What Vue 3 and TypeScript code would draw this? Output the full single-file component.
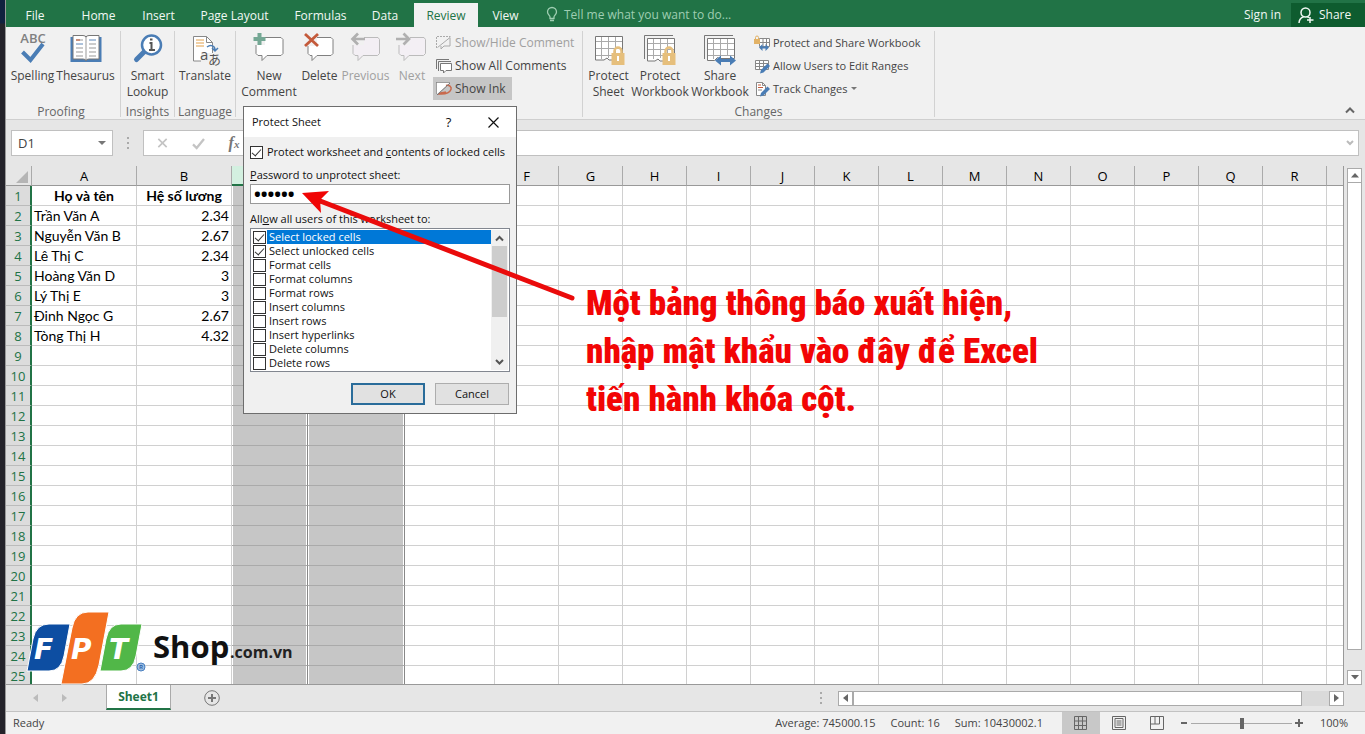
<script setup lang="ts">
import { ref } from 'vue'

interface Person { name: string; rate: string }
interface Permission { label: string; checked: boolean }
interface Column { key: string; heading: string; picked: boolean }

const tabs = ['File', 'Home', 'Insert', 'Page Layout', 'Formulas', 'Data', 'Review', 'View']
const columns: Column[] = 'ABCDEFGHIJKLMNOPQR'.split('').map((key) => ({
  key,
  heading: 'CDE'.includes(key) ? '' : key,
  picked: 'CD'.includes(key),
}))
const people: Person[] = [
  { name: 'Trần Văn A', rate: '2.34' },
  { name: 'Nguyễn Văn B', rate: '2.67' },
  { name: 'Lê Thị C', rate: '2.34' },
  { name: 'Hoàng Văn D', rate: '3' },
  { name: 'Lý Thị E', rate: '3' },
  { name: 'Đinh Ngọc G', rate: '2.67' },
  { name: 'Tòng Thị H', rate: '4.32' },
]
const permissions = ref<Permission[]>([
  { label: 'Select locked cells', checked: true },
  { label: 'Select unlocked cells', checked: true },
  { label: 'Format cells', checked: false },
  { label: 'Format columns', checked: false },
  { label: 'Format rows', checked: false },
  { label: 'Insert columns', checked: false },
  { label: 'Insert rows', checked: false },
  { label: 'Insert hyperlinks', checked: false },
  { label: 'Delete columns', checked: false },
  { label: 'Delete rows', checked: false },
])
const protectSheet = ref(true)
const password = ref('123456')
const zoom = ref(100)

function cellText(row: number, col: string): string {
  if (row === 1) return col === 'A' ? 'Họ và tên' : col === 'B' ? 'Hệ số lương' : ''
  const person = people[row - 2]
  if (!person) return ''
  return col === 'A' ? person.name : col === 'B' ? person.rate : ''
}
</script>

<template>
  <div class="screen">
    <div class="desktop-edge"></div>
    <main class="window">
      <header class="tabbar">
        <nav class="tabs">
          <button v-for="t in tabs" :key="t" class="tab" :class="{ active: t === 'Review' }">{{ t }}</button>
        </nav>
        <button class="tell">
          <svg width="12" height="16" viewBox="0 0 12 16" fill="none" stroke="currentColor">
            <path d="M4 11.500V10C4 8.500 1.500 7.500 1.500 5a4.500 4.500 0 0 1 9 0C10.500 7.500 8 8.500 8 10v1.500ZM4 13.500h4" stroke-width="1.300" />
          </svg>
          <span>Tell me what you want to do...</span>
        </button>
        <button class="signin">Sign in</button>
        <button class="share">
          <svg width="16" height="17" viewBox="0 0 16 17" fill="none" stroke="currentColor" stroke-width="1.500">
            <circle cx="7.500" cy="5.500" r="4.500" />
            <path d="M1 16c.3-3.500 2-5.500 4.500-6M9.500 9.800l1.500.9M12 10v6M9 13h6.500" />
          </svg>
          <span>Share</span>
        </button>
      </header>

      <section class="ribbon">
        <div class="group proofing">
          <div class="tools">
            <button class="big">
              <svg width="32" height="36" viewBox="0 0 32 36">
                <text x="16" y="13" text-anchor="middle" class="abc">ABC</text>
                <path d="M5.500 22l8 8 12.500-16" fill="none" stroke="#4a7db5" stroke-width="4" />
              </svg>
              <span>Spelling</span>
            </button>
            <button class="big">
              <svg width="32" height="36" viewBox="0 0 32 36" fill="none">
                <path d="M.5 7h31v25h-31z" fill="#4a7db5" />
                <path d="M3 5.500h10q3 0 3 2 0-2 3-2h10V29H19q-3 0-3 2 0-2-3-2H3Z" fill="#fff" stroke="#777" />
                <path d="M16 8v22" stroke="#999" />
                <path d="M6 10h7M6 18h7M6 22h7M6 26h7M19 14h7M19 18h7M19 22h7M19 26h7" stroke="#999" />
                <path d="M6 10h4" stroke="#c4542f" /><path d="M6 14h7M19 10h7" stroke="#5b86b8" />
              </svg>
              <span>Thesaurus</span>
            </button>
          </div>
          <h2>Proofing</h2>
        </div>

        <div class="group insights">
          <div class="tools">
            <button class="big">
              <svg width="32" height="36" viewBox="0 0 32 36" fill="none">
                <path d="M12 22L4.500 29.500" stroke="#4a7db5" stroke-width="5" stroke-linecap="round" />
                <circle cx="19.500" cy="15" r="9.500" fill="#fff" stroke="#4a7db5" stroke-width="2.500" />
                <path d="M17.500 13h2v7M17 20h6" stroke="#555" stroke-width="2" /><path d="M18 8.500h2.500v2H18z" fill="#555" />
              </svg>
              <span>Smart<br />Lookup</span>
            </button>
          </div>
          <h2>Insights</h2>
        </div>

        <div class="group language">
          <div class="tools">
            <button class="big">
              <svg width="32" height="36" viewBox="0 0 32 36" fill="none">
                <path d="M4.500 6.500h13l6 6V31h-19z" fill="#fff" stroke="#888" />
                <path d="M17.500 6.500v6h6" stroke="#888" />
                <path d="M7 10h8M7 13h8M7 16h8" stroke="#e2a04a" /><path d="M12 23h12v9H12z" fill="#f0f0f0" />
                <path d="M18 17c4-3 8-1 8 3m-3-2 3 3 3-3" stroke="#4a7db5" stroke-width="1.500" />
                <text x="11" y="30" class="glyph">a</text><text x="19" y="34" class="glyph jp">あ</text>
              </svg>
              <span>Translate</span>
            </button>
          </div>
          <h2>Language</h2>
        </div>

        <div class="group comments">
          <div class="tools">
            <button class="big wide">
              <svg width="32" height="36" viewBox="0 0 32 36" fill="none">
                <path d="M5 7.500h23l2 2v14l-2 2H14l-5 5v-5H5l-2-2v-14Z" fill="#fff" stroke="#808080" />
                <path d="M-2 4h14v11H-2z" fill="#f1f1f1" />
                <path d="M6.500 3v12M.500 9h12" stroke="#74a794" stroke-width="4" />
              </svg>
              <span>New<br />Comment</span>
            </button>
            <button class="big del">
              <svg width="32" height="36" viewBox="0 0 32 36" fill="none">
                <path d="M6 7.500h21l2 2v14l-2 2H13l-5 5v-5H6l-2-2v-14Z" fill="#fff" stroke="#808080" />
                <path d="M0 3h13v13H0z" fill="#f1f1f1" />
                <path d="M1 4l13 12M14 4L1 16" stroke="#c45a3b" stroke-width="2.800" />
              </svg>
              <span>Delete</span>
            </button>
            <button class="big prev" disabled>
              <svg width="32" height="36" viewBox="0 0 32 36" fill="none">
                <path d="M5 7.500h23l1.500 2v14l-2 2H13l-5 5v-5H5l-2-2v-14Z" fill="#f3eff4" stroke="#bbb" />
                <path d="M0 3h14v12H0z" fill="#f1f1f1" />
                <path d="M15 9H3M8 3.500L2.500 9 8 14.500" stroke="#b0b0b0" stroke-width="2.700" />
              </svg>
              <span>Previous</span>
            </button>
            <button class="big next" disabled>
              <svg width="32" height="36" viewBox="0 0 32 36" fill="none">
                <path d="M5 7.500h23l1.500 2v14l-2 2H13l-5 5v-5H5l-2-2v-14Z" fill="#f3eff4" stroke="#bbb" />
                <path d="M0 3h14v12H0z" fill="#f1f1f1" />
                <path d="M0 9h12M7.500 3.500L13 9l-5.500 5.500" stroke="#b0b0b0" stroke-width="2.700" />
              </svg>
              <span>Next</span>
            </button>
            <div class="small-tools">
              <button class="small" disabled>
                <svg width="16" height="16" viewBox="0 0 16 16" fill="none" stroke="#aaa">
                  <path d="M1.500 12.500L14 2.500V11H8l-3 3v-3" /><path d="M.5 13V1.500h14" stroke-dasharray="2 1" />
                </svg>
                Show/Hide Comment
              </button>
              <button class="small">
                <svg width="16" height="16" viewBox="0 0 16 16" fill="none" stroke="#777">
                  <path d="M.5 11V1.500H13M2.500 13V3.500H15" /><path d="M4.500 5.500h11v7H10l-2.500 2.500v-2.500h-3Z" fill="#fff" />
                </svg>
                Show All Comments
              </button>
              <button class="small pressed">
                <svg width="16" height="16" viewBox="0 0 16 16" fill="none">
                  <path d="M1 2h13L1 13z" fill="#fff" /><path d="M.5 1.500h13M.5 1.500V13" stroke="#777" stroke-dasharray="1 1" />
                  <path d="M10 4.500c3-1 6 1.500 5 4s-5 5-12 4.500c2-2 5-1 7-2" stroke="#c96a4d" stroke-width="1.500" /><path d="M1 14L14 2" stroke="#777" />
                </svg>
                Show Ink
              </button>
            </div>
          </div>
        </div>

        <div class="group changes">
          <div class="tools">
            <button class="big psheet">
              <svg width="32" height="36" viewBox="0 0 32 36" fill="none">
                <path d="M2.500 6.500h27v17L20 30h-4l-2-2-3 2H2.500Z" fill="#fff" stroke="#777" />
                <path d="M8.500 7v22M15.500 7v21M22.500 7v20M3 11.500h26M3 18.500h26M3 25.500h26" stroke="#aaa" />
                <path d="M21.500 24v-3a3.500 3.500 0 0 1 7 0v3" stroke="#e6bf7c" stroke-width="2.500" /><path d="M18.500 23h13v12h-13z" fill="#e6bf7c" /><path d="M25 26v5" stroke="#fff" stroke-width="2" />
              </svg>
              <span>Protect<br />Sheet</span>
            </button>
            <button class="big pbook">
              <svg width="32" height="36" viewBox="0 0 32 36" fill="none">
                <path d="M.5 29V5.500H29" stroke="#777" />
                <path d="M3.500 8.500h27v17L20 31h-4l-2-2-3 2H3.500Z" fill="#fff" stroke="#777" />
                <path d="M9.500 9v20M16.500 9v19M23.500 9v17M4 13.500h26M4 19.500h26M4 25.500h26" stroke="#aaa" />
                <path d="M21.500 24v-3a3.500 3.500 0 0 1 7 0v3" stroke="#e6bf7c" stroke-width="2.500" /><path d="M18.500 23h13v12h-13z" fill="#e6bf7c" /><path d="M25 26v5" stroke="#fff" stroke-width="2" />
              </svg>
              <span>Protect<br />Workbook</span>
            </button>
            <button class="big sbook">
              <svg width="32" height="36" viewBox="0 0 32 36" fill="none">
                <path d="M.5 29V5.500H29" stroke="#777" />
                <path d="M3.500 8.500h27v20h-15l-2-1-3 3h-7Z" fill="#fff" stroke="#777" />
                <path d="M9.500 9v20M16.500 9v18M23.500 9v17M4 13.500h26M4 19.500h26M4 25.500h26" stroke="#aaa" />
                <path d="M11 30.500l6-5v3.500h9v-3.500l6 5-6 5V32h-9v3.500Z" fill="#4a7db5" />
              </svg>
              <span>Share<br />Workbook</span>
            </button>
            <div class="small-tools">
              <button class="small">
                <svg width="16" height="16" viewBox="0 0 16 16" fill="none">
                  <path d="M5.500 3.500h10v8h-10zM9 3.500v8M12.500 3.500v8M5.500 7.500h10" fill="#fff" stroke="#888" />
                  <path d="M1.500 4V2.500a1.500 1.500 0 0 1 3 0V4" stroke="#e2b266" /><path d="M0 4h6v5H0z" fill="#e2b266" />
                  <path d="M5 12.500L8.500 9v2.500h3V9l3.500 3.500-3.500 3.500v-2.500h-3V16Z" fill="#4a7db5" />
                </svg>
                Protect and Share Workbook
              </button>
              <button class="small">
                <svg width="16" height="16" viewBox="0 0 16 16" fill="none">
                  <path d="M1.500 2.500h13v9h-13zM5.500 2.500v9M9.500 2.500v9M1.500 5.500h13M1.500 8.500h13" fill="#fff" stroke="#888" />
                  <path d="M6 15.500l1-3.500 6.500-6.500 2.500 2.500-6.500 6.500Z" fill="#4a7db5" />
                </svg>
                Allow Users to Edit Ranges
              </button>
              <button class="small">
                <svg width="16" height="16" viewBox="0 0 16 16" fill="none">
                  <path d="M2.500 1.500h6l3 3v10h-9z" fill="#fff" stroke="#888" /><path d="M8.500 1.500v3h3M4 9h4" stroke="#888" /><path d="M4 4h3M4 6.500h5" stroke="#c45a3b" />
                  <path d="M6 15.500l1-3.500 6.500-6.500 2.500 2.500-6.500 6.500Z" fill="#4a7db5" />
                </svg>
                <span>Track Changes</span>
                <svg class="caret" width="6" height="4" viewBox="0 0 6 4"><path d="M0 0h6L3 3z" fill="#777" /></svg>
              </button>
            </div>
          </div>
          <h2>Changes</h2>
        </div>
        <button class="collapse" aria-label="Collapse the ribbon">
          <svg width="10" height="7" viewBox="0 0 10 7"><path d="M1 5.500l4-4 4 4" fill="none" stroke="#666" stroke-width="2" /></svg>
        </button>
      </section>

      <section class="formula-row">
        <button class="namebox">
          <span>D1</span>
          <svg width="8" height="4" viewBox="0 0 8 4"><path d="M0 0h8L4 4z" fill="#777" /></svg>
        </button>
        <span class="dots"><i></i><i></i><i></i></span>
        <div class="formula">
          <button aria-label="Cancel entry"><svg width="11" height="10" viewBox="0 0 12 12"><path d="M1 1l10 10M11 1L1 11" stroke="#c4c4c4" stroke-width="2" /></svg></button>
          <button aria-label="Enter"><svg width="13" height="11" viewBox="0 0 14 12"><path d="M1 7l4 4 8-10" fill="none" stroke="#c4c4c4" stroke-width="2.500" /></svg></button>
          <button class="fx" aria-label="Insert function">f<small>x</small></button>
          <input type="text" aria-label="Formula bar" />
          <svg width="8" height="6" viewBox="0 0 8 6"><path d="M1 1l3 3 3-3" fill="none" stroke="#bbb" stroke-width="2" /></svg>
        </div>
      </section>

      <section class="workspace">
        <div class="grid">
          <table>
            <colgroup>
              <col class="c-head" /><col class="c-a" /><col class="c-b" /><col class="c-c" /><col class="c-d" /><col class="c-e" />
              <col v-for="n in 13" :key="n" class="c-std" /><col />
            </colgroup>
            <thead>
              <tr>
                <th class="corner"><svg width="12" height="12" viewBox="0 0 12 12"><path d="M12 0v12H0z" fill="#b5b5b5" /></svg></th>
                <th v-for="c in columns" :key="c.key" :class="{ picked: c.picked }">{{ c.heading }}</th>
                <th class="rest"></th>
              </tr>
            </thead>
            <tbody>
              <tr v-for="r in 25" :key="r" :class="{ titles: r === 1 }">
                <th>{{ r }}</th>
                <td v-for="c in columns" :key="c.key" :class="{ num: c.key === 'B', sel: c.picked }">{{ cellText(r, c.key) }}</td>
                <td class="rest"></td>
              </tr>
            </tbody>
          </table>
        </div>
        <div class="vscroll">
          <button aria-label="Scroll up"><svg width="8" height="5" viewBox="0 0 8 5"><path d="M0 4.500h8L4 0z" fill="#666" /></svg></button>
          <div class="vthumb"></div>
          <button aria-label="Scroll down"><svg width="8" height="5" viewBox="0 0 8 5"><path d="M0 0h8L4 4.500z" fill="#666" /></svg></button>
        </div>
      </section>

      <section class="sheetbar">
        <div class="arrows">
          <svg width="5" height="8" viewBox="0 0 5 8"><path d="M5 0v8L0 4z" fill="#bbb" /></svg>
          <svg width="5" height="8" viewBox="0 0 5 8"><path d="M0 0v8l5-4z" fill="#bbb" /></svg>
        </div>
        <button class="sheet">Sheet1</button>
        <button class="add" aria-label="New sheet">
          <svg width="16" height="16" viewBox="0 0 16 16" fill="none" stroke="#777"><circle cx="8" cy="8" r="7.300" /><path d="M4 8h8M8 4v8" stroke-width="2" /></svg>
        </button>
        <span class="dots"><i></i><i></i><i></i></span>
        <div class="hscroll">
          <button aria-label="Scroll left"><svg width="5" height="8" viewBox="0 0 5 8"><path d="M5 0v8L0 4z" fill="#666" /></svg></button>
          <div class="hthumb"></div>
          <button aria-label="Scroll right"><svg width="5" height="8" viewBox="0 0 5 8"><path d="M0 0v8l5-4z" fill="#666" /></svg></button>
        </div>
      </section>

      <footer class="status">
        <span class="ready">Ready</span>
        <span class="stat">Average: 745000.15</span>
        <span class="stat">Count: 16</span>
        <span class="stat">Sum: 10430002.1</span>
        <div class="views">
          <button class="on" aria-label="Normal view"><svg width="14" height="14" viewBox="0 0 14 14"><path d="M.5.5h12v13H.5zM4.500 0v13M8.500 0v13M0 5h13M0 9.500h13" fill="none" stroke="#666" /></svg></button>
          <button aria-label="Page layout view"><svg width="14" height="14" viewBox="0 0 14 14"><path d="M.5.5h13v13H.5zM3 2.500h8v9H3zM4.500 5h5M4.500 7h5M4.500 9h5" fill="none" stroke="#666" /></svg></button>
          <button aria-label="Page break view"><svg width="14" height="14" viewBox="0 0 14 14"><path d="M.5.5h13v13H.5zM5 .5V8M9.500 .5V8M.5 8h9" fill="none" stroke="#666" /></svg></button>
        </div>
        <div class="zoomer">
          <button aria-label="Zoom out"><svg width="8" height="8" viewBox="0 0 8 8"><path d="M1 4h6" stroke="#666" stroke-width="2" /></svg></button>
          <input v-model="zoom" type="range" min="0" max="200" aria-label="Zoom" />
          <button aria-label="Zoom in"><svg width="8" height="8" viewBox="0 0 8 8"><path d="M0 4h8M4 0v8" stroke="#666" stroke-width="2" /></svg></button>
        </div>
        <button class="percent">{{ zoom }}%</button>
      </footer>

      <form class="dialog" role="dialog" aria-labelledby="dialog-title" @submit.prevent>
        <div class="titlebar">
          <h1 id="dialog-title">Protect Sheet</h1>
          <button type="button" class="help">?</button>
          <button type="button" aria-label="Close"><svg width="11" height="11" viewBox="0 0 11 11"><path d="M.5.5l10 10M10.500.5l-10 10" stroke="#111" stroke-width="1.200" /></svg></button>
        </div>
        <div class="body">
          <label class="check"><input v-model="protectSheet" type="checkbox" /><span>Protect worksheet and <u>c</u>ontents of locked cells</span></label>
          <label class="line" for="password"><u>P</u>assword to unprotect sheet:</label>
          <input id="password" v-model="password" class="password" type="password" autocomplete="off" />
          <p class="line allow">All<u>o</u>w all users of this worksheet to:</p>
          <div class="list">
            <div class="items">
              <label v-for="(p, i) in permissions" :key="p.label" class="check item" :class="{ current: i === 0 }">
                <input v-model="p.checked" type="checkbox" /><span>{{ p.label }}</span>
              </label>
            </div>
            <div class="listscroll">
              <svg width="9" height="16" viewBox="0 0 9 16"><path d="M1 10.500L4.500 7 8 10.500" fill="none" stroke="#555" stroke-width="2" /></svg>
              <div class="lthumb"></div>
              <svg width="9" height="16" viewBox="0 0 9 16"><path d="M1 6l3.500 3.500L8 6" fill="none" stroke="#555" stroke-width="2" /></svg>
            </div>
          </div>
          <div class="actions">
            <button type="submit" class="ok">OK</button>
            <button type="button">Cancel</button>
          </div>
        </div>
      </form>

      <svg class="arrow" width="280" height="112" viewBox="0 0 280 112">
        <path d="M14 10L271 109" stroke="#ea0b0b" stroke-width="5" stroke-linecap="round" />
        <path d="M1 4l27-2-9 9 1 13z" fill="#f00505" />
      </svg>
      <p class="note">Một bảng thông báo xuất hiện,<br />nhập mật khẩu vào đây để Excel<br />tiến hành khóa cột.</p>

      <svg class="logo" width="272" height="74" viewBox="0 0 272 74">
        <g stroke="#fff" stroke-width="1">
          <path d="M1 60L7 28Q10 13 23 13H44L38 45Q35 60 23 60Z" fill="#0d4ea2" />
          <path d="M35 73L46 17Q49 1 62 1H83L73 54Q69 73 56 73Z" fill="#f36f21" />
          <path d="M74 60L80 28Q83 13 95 13H116L110 45Q107 60 95 60Z" fill="#51b748" />
        </g>
        <g class="letters"><text x="8" y="48">F</text><text x="45" y="48">P</text><text x="83" y="48">T</text></g>
        <circle cx="115" cy="56" r="4" fill="#9dbce0" stroke="#4a80c0" /><text x="115" y="58" class="reg">R</text>
        <text x="127" y="47" class="shop">Shop</text><text x="204" y="47" class="domain">.com.vn</text>
      </svg>
    </main>
  </div>
</template>

<style>
body { margin: 0; }
</style>

<style scoped>
* { box-sizing: border-box; }
.screen { display: flex; min-height: 100vh; font: 12px/16px "Open Sans", "Noto Sans", sans-serif; color: #444; overflow: hidden; }
button { font: inherit; color: inherit; background: none; border: 0; padding: 0; margin: 0; white-space: nowrap; }
input { margin: 0; font: inherit; }
h1, h2, p { margin: 0; font: inherit; }
svg { flex: none; overflow: visible; }
.desktop-edge { width: 6px; flex: none; background: linear-gradient(#10213f 0 23px, #24232a 24px); border-right: 1px solid #999; }
.window { position: relative; flex: 1; min-width: 0; display: flex; flex-direction: column; background: #e6e6e6; }

.tabbar { display: flex; align-items: stretch; height: 27px; flex: none; background: #217346; color: #f1f8f4; }
.tabs { display: grid; grid-template-columns: 58px 69px 51px 101px 71px 58px 64px 55px; padding-top: 3px; }
.tab { padding-top: 1px; }
.tab.active { background: #f1f1f1; color: #217346; }
.tell { display: flex; align-items: center; gap: 6px; margin-left: 13px; padding-top: 3px; color: #9fceb2; }
.signin { margin-left: auto; margin-right: 10px; padding-top: 3px; }
.share { display: flex; align-items: center; gap: 5px; width: 74px; margin-top: 3px; padding-left: 7px; background: #0e5c2f; }

.ribbon { display: flex; height: 93px; flex: none; padding: 4px 0 2px; background: #f1f1f1; border-bottom: 1px solid #cfcfcf; }
.group { display: flex; flex-direction: column; justify-content: space-between; border-right: 1px solid #d2d2d2; }
.group h2 { text-align: center; color: #666; line-height: 10px; }
.tools { display: flex; align-items: flex-start; justify-content: center; }
.big { display: flex; flex-direction: column; align-items: center; margin-top: -1px; }
.big span { margin-top: 2px; }
.proofing { width: 115px; padding-right: 6px; padding-left: 2px; }
.proofing .big:first-child { width: 50px; }
.proofing .big { width: 57px; }
.insights { width: 54px; }
.language { width: 61px; }
.comments { width: 347px; }
.comments .tools, .changes .tools { justify-content: flex-start; padding-left: 3px; }
.wide { width: 60px; }
.del { width: 41px; }
.prev { width: 51px; }
.next { width: 42px; }
.changes { width: 352px; }
.changes .tools { padding-left: 4px; }
.psheet { width: 43px; }
.pbook { width: 60px; }
.sbook { width: 60px; margin-right: 4px; }
button:disabled { color: #a0a0a0; }
.small-tools { display: flex; flex-direction: column; align-items: flex-start; }
.small { display: flex; align-items: center; gap: 3px; height: 23px; padding: 0 6px 0 3px; }
.changes .small { padding-left: 0; font-size: 11px; }
.pressed { background: #c6c6c6; }
.abc { font: 600 13px "Open Sans", sans-serif; fill: #808080; }
.glyph { font: 15px "Open Sans", sans-serif; fill: #555; }
.glyph.jp { font: 13px "Noto Sans CJK JP", sans-serif; }
.collapse { margin: 76px 10px 0 auto; line-height: 0; align-self: flex-start; }

.formula-row { display: flex; align-items: center; height: 46px; flex: none; padding: 0 6px 0 5px; }
.namebox { display: flex; align-items: center; justify-content: space-between; width: 102px; height: 26px; padding: 0 6px; background: #fff; border: 1px solid #c0c0c0; font-size: 13px; }
.dots { display: flex; flex-direction: column; gap: 3px; width: 2px; }
.dots i { height: 2px; background: #aaa; }
.formula-row .dots { margin: 0 14px; }
.formula { flex: 1; display: flex; align-items: center; height: 26px; background: #fff; border: 1px solid #c0c0c0; padding-right: 4px; }
.formula button { width: 36px; line-height: 0; }
.formula .fx { font: italic bold 16px/20px "Liberation Serif", serif; color: #777; }
.fx small { font-size: 11px; }
.formula input { flex: 1; min-width: 0; border: 0; outline: 0; }

.workspace { display: flex; height: 519px; flex: 1 0 auto; }
.grid { flex: 1; min-width: 0; height: 519px; overflow: hidden; border-right: 1px solid #999; border-bottom: 1px solid #999; background: #fff; }
table { width: 100%; table-layout: fixed; border-collapse: separate; border-spacing: 0; font-family: Lato, "Open Sans", sans-serif; font-size: 14px; color: #000; }
.c-head { width: 26px; } .c-a { width: 105px; } .c-b { width: 95px; } .c-c { width: 76px; } .c-d { width: 97px; } .c-e { width: 90px; } .c-std { width: 64px; }
th, td { height: 20px; padding: 0 2px; line-height: 18px; overflow: hidden; white-space: nowrap; font-weight: 400; border-right: 1px solid #d0d0d0; border-bottom: 1px solid #d0d0d0; }
thead th { background: #e6e6e6; border-right-color: #aaa; border-bottom-color: #999; font-family: "Open Sans", sans-serif; font-size: 13px; }
thead .picked { background: #d3f0e0; border-bottom: 2px solid #217346; }
.rest { border-right: 0; }
.corner { line-height: 0; text-align: right; vertical-align: bottom; padding: 2px 3px; }
tbody th { background: #dcdcdc; color: #217346; padding: 0; border-right: 2px solid #217346; border-bottom-color: #bbb; font-family: "Open Sans", sans-serif; font-size: 13px; }
.num { text-align: right; }
.titles td { font-weight: 700; text-align: center; }
.sel { background: #c6c6c6; border-bottom-color: #aaa; border-right-color: #888; box-shadow: inset 1px 0 #fff, inset -1px 0 #fff; }
.vscroll { display: flex; flex-direction: column; width: 21px; padding: 2px 3px 0; }
.vscroll button { height: 15px; flex: none; background: #fff; border: 1px solid #aaa; line-height: 0; display: grid; place-items: center; }
.vthumb { height: 467px; background: #fff; border: 1px solid #aaa; border-top-width: 0; }
.vscroll button:last-child { margin-top: auto; }

.sheetbar { display: flex; align-items: center; height: 27px; flex: none; padding-right: 21px; border-bottom: 1px solid #c2c2c2; }
.arrows { display: flex; gap: 24px; width: 100px; padding-left: 27px; }
.sheet { align-self: flex-start; width: 65px; height: 25px; background: #fff; border: 1px solid #aaa; border-top: 0; border-bottom: 2px solid #217346; color: #217346; font-weight: 700; }
.add { margin-left: 33px; line-height: 0; }
.sheetbar .dots { margin-left: auto; margin-right: 16px; }
.hscroll { display: flex; width: 506px; height: 15px; background: #dadada; }
.hscroll button { width: 15px; background: #fff; border: 1px solid #aaa; line-height: 0; display: grid; place-items: center; }
.hthumb { width: 449px; background: #fff; border: 1px solid #aaa; }
.hscroll button:last-child { margin-left: auto; }

.status { display: flex; align-items: center; height: 22px; flex: none; background: #f1f1f1; font-size: 11px; }
.ready { margin-left: 7px; margin-right: auto; }
.stat { margin-right: 15px; }
.views { display: flex; align-self: stretch; margin-left: 4px; }
.views button { width: 38px; display: grid; place-items: center; }
.views .on { background: #c8c8c8; }
.zoomer { display: flex; align-items: center; gap: 3px; margin-left: 4px; }
.zoomer button { line-height: 0; }
.zoomer input { appearance: none; width: 101px; height: 12px; background: linear-gradient(#aaa, #aaa) center / 100% 1px no-repeat; }
.zoomer input::-webkit-slider-thumb { appearance: none; width: 4px; height: 11px; background: #666; }
.percent { width: 62px; text-align: center; }

.dialog { position: absolute; left: 237px; top: 106px; width: 274px; background: #f0f0f0; border: 1px solid #6d6d6d; color: #111; font-size: 11px; line-height: 14px; }
.titlebar { display: flex; align-items: center; height: 30px; background: #fff; padding-left: 8px; }
.titlebar h1 { flex: 1; }
.titlebar button { width: 45px; display: grid; place-items: center; font-size: 13px; }
.body { padding: 8px 6px 8px 6px; display: flex; flex-direction: column; }
.check { display: flex; align-items: center; gap: 4px; white-space: nowrap; }
.check input { appearance: none; flex: none; width: 13px; height: 13px; background: #fff; border: 1px solid #333; display: grid; place-items: center; }
.check input:checked::before { content: ""; width: 8px; height: 4px; border: solid #333; border-width: 0 0 1px 1px; transform: translateY(-1px) rotate(-48deg); }
.line { margin-top: 9px; }
.password { height: 20px; margin-top: 2px; padding: 0 3px; border: 1px solid #999; background: #fff; color: #000; font-size: 18px; font-weight: 700; outline: 0; }
.allow { margin-top: 8px; }
.list { display: flex; height: 144px; margin-top: 2px; padding: 1px; background: #fff; border: 1px solid #828790; overflow: hidden; }
.items { flex: 1; }
.item { height: 14px; padding-left: 1px; gap: 1px; }
.item span { flex: 1; padding-left: 2px; }
.current span { background: #0078d7; color: #fff; }
.listscroll { width: 17px; display: flex; flex-direction: column; align-items: center; background: #f0f0f0; }
.lthumb { width: 15px; height: 71px; background: #cdcdcd; margin-bottom: auto; }
.actions { display: flex; justify-content: flex-end; gap: 10px; margin-top: 11px; padding-right: 1px; }
.actions button { width: 74px; height: 22px; background: #e1e1e1; border: 1px solid #adadad; }
.actions .ok { border: 2px solid #2a6c9a; }

.arrow { position: absolute; left: 295px; top: 189px; }
.note { position: absolute; left: 580px; top: 280px; font: 900 35px/48px "Roboto Condensed", "Open Sans Condensed", "Liberation Sans Narrow", sans-serif; color: #f20505; white-space: nowrap; }
.logo { position: absolute; left: 20px; bottom: 49px; }
.letters { font: italic bold 28px "DejaVu Sans", sans-serif; fill: #fff; }
.reg { font: bold 5px "Liberation Sans", sans-serif; fill: #2a60a8; text-anchor: middle; }
.shop { font: bold 31px "Open Sans", sans-serif; fill: #111; }
.domain { font: bold 16px "Open Sans", sans-serif; fill: #222; }
</style>
